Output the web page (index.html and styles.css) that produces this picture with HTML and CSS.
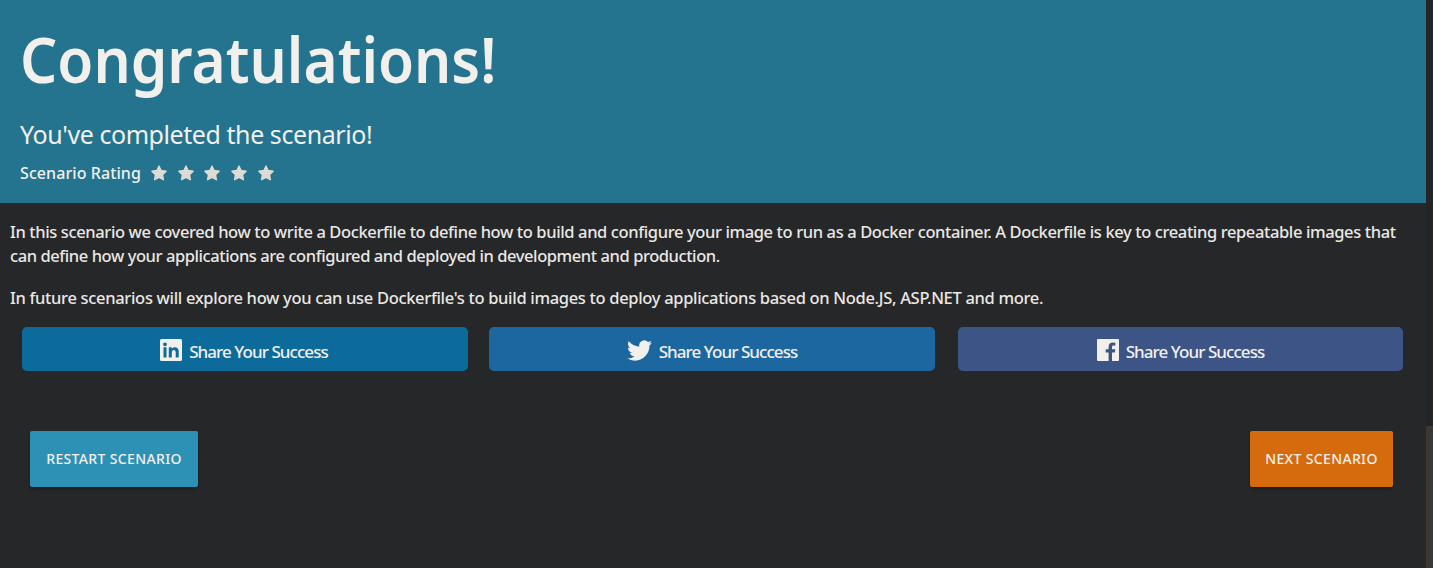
FILE: index.html
```
<!DOCTYPE html>
<html lang="en">
<head>
<meta charset="utf-8">
<title>Congratulations!</title>
<link rel="stylesheet" href="styles.css">
</head>
<body>
<svg class="symbols" aria-hidden="true">
  <symbol id="star" viewBox="0 0 24 24"><path stroke-width="2" stroke-linejoin="round" d="M12 1.500l3.200 6.700 7.500 1.100-5.400 5.300 1.300 7.500L12 18.600l-6.600 3.500 1.300-7.500L1.300 9.300l7.500-1.100z"/></symbol>
</svg>
<div class="page">
  <main class="panel">
    <header class="hero">
      <h1 class="title">Congratulations!</h1>
      <h2 class="subtitle">You've completed the scenario!</h2>
      <div class="rating">
        <span class="rating-label">Scenario Rating</span>
        <div class="stars">
          <svg class="star"><use href="#star"/></svg>
          <svg class="star"><use href="#star"/></svg>
          <svg class="star"><use href="#star"/></svg>
          <svg class="star"><use href="#star"/></svg>
          <svg class="star"><use href="#star"/></svg>
        </div>
      </div>
    </header>
    <section class="summary">
      <p class="copy intro"><span class="lead">In this scenario we covered how to write a Dockerfile to define how to build and configure your image to run as a Docker container. A Dockerfile is key to creating repeatable images that</span><br>can define how your applications are configured and deployed in development and production.</p>
      <p class="copy">In future scenarios will explore how you can use Dockerfile's to build images to deploy applications based on Node.JS, ASP.NET and more.</p>
    </section>
    <div class="share-row">
      <a class="share linkedin">
        <svg class="share-icon" viewBox="0 0 22 22"><path fill-rule="evenodd" d="M1.500 0h19A1.500 1.500 0 0 1 22 1.500v19a1.500 1.500 0 0 1-1.500 1.500h-19A1.500 1.500 0 0 1 0 20.500v-19A1.500 1.500 0 0 1 1.500 0zM3.500 8.300v10.300h3V8.300zM5 3.400a1.900 1.900 0 1 0 0 3.800 1.900 1.900 0 0 0 0-3.800zM8.800 8.300v10.300h3v-5.100c0-3.200 3.900-3.400 3.900 0v5.100h3v-6.200c0-5-5.200-5.200-6.900-2.600V8.300z"/></svg>
        <span class="share-text">Share Your Success</span>
      </a>
      <a class="share twitter">
        <svg class="share-icon bird" viewBox="0 2 24 20"><path d="M23.953 4.570a10 10 0 0 1-2.825.775 4.958 4.958 0 0 0 2.163-2.723 9.900 9.900 0 0 1-3.127 1.184 4.920 4.920 0 0 0-8.384 4.482C7.690 8.095 4.067 6.130 1.640 3.162a4.822 4.822 0 0 0-.666 2.475c0 1.710.87 3.213 2.188 4.096a4.904 4.904 0 0 1-2.228-.616v.06a4.923 4.923 0 0 0 3.946 4.827 4.996 4.996 0 0 1-2.212.085 4.936 4.936 0 0 0 4.604 3.417 9.867 9.867 0 0 1-6.102 2.105c-.39 0-.779-.023-1.170-.067a13.995 13.995 0 0 0 7.557 2.209c9.053 0 13.998-7.496 13.998-13.985 0-.21 0-.42-.015-.63A9.935 9.935 0 0 0 24 4.590z"/></svg>
        <span class="share-text">Share Your Success</span>
      </a>
      <a class="share facebook">
        <svg class="share-icon" viewBox="0 0 22 22"><path d="M1 0h20a1 1 0 0 1 1 1v20a1 1 0 0 1-1 1h-6v-8.500h2.900l.4-3.300H15V8.100c0-1 .3-1.600 1.700-1.600h1.700V3.700l-2.500-.1c-2.600 0-4.300 1.500-4.300 4.300v2.300H8.700v3.300h2.900V22H1a1 1 0 0 1-1-1V1a1 1 0 0 1 1-1z"/></svg>
        <span class="share-text">Share Your Success</span>
      </a>
    </div>
    <div class="actions">
      <button class="action restart">RESTART SCENARIO</button>
      <button class="action next">NEXT SCENARIO</button>
    </div>
  </main>
  <aside class="rail"><div class="thumb"></div></aside>
</div>
</body>
</html>
```
FILE: styles.css
```
* { box-sizing: border-box; }
body {
  margin: 0;
  background: #262729;
  color: #f2f0ec;
  font-family: "Noto Sans", "Open Sans", sans-serif;
  overflow: hidden;
}
.symbols { display: none; }
.page { display: flex; height: 568px; }
.panel { width: 1426px; background: #262729; }
.hero { height: 203px; padding: 15px 20px 0; background: #24748f; }
.title { margin: 0; font-size: 64px; line-height: 87px; font-weight: 600; transform: scaleX(.914); transform-origin: left; white-space: nowrap; }
.subtitle { margin: 14px 0 0; font-size: 25px; line-height: 36px; font-weight: 400; letter-spacing: -0.430px; }
.rating { display: flex; align-items: center; height: 42px; font-size: 16px; font-weight: 500; letter-spacing: 0.080px; }
.rating-label { width: 131px; white-space: nowrap; }
.stars { display: flex; gap: 10.700px; }
.star { width: 16px; height: 16px; fill: #dedbd5; stroke: #dedbd5; }
.summary { padding: 17px 10px 0; }
.copy { margin: 0 0 18px; font-size: 16.500px; line-height: 24px; font-weight: 500; letter-spacing: -0.322px; color: #eae8e4; white-space: nowrap; }
.intro { letter-spacing: -0.425px; }
.lead { letter-spacing: -0.382px; }
.share-row { display: grid; grid-template-columns: 446px 446px 445px; column-gap: 22px; padding-left: 22px; margin-top: -1px; }
.share { display: flex; align-items: center; justify-content: center; gap: 7px; height: 44px; border-radius: 5px; font-size: 17px; font-weight: 500; }
.linkedin { padding-right: 2px; background: #0d6b9c; }
.twitter { margin: 0 1px 0 -1px; width: 446px; background: #1d67a0; }
.facebook { background: #3d5487; }
.share-icon { width: 22px; height: 22px; margin-top: 2px; fill: #f2f0ec; }
.share-text { padding-top: 5px; letter-spacing: -0.930px; white-space: nowrap; }
.bird { width: 25px; height: 21px; }
.actions { display: flex; justify-content: space-between; padding: 60px 33px 0 30px; }
.action { height: 56px; padding: 0 0 2px; border: 0; border-radius: 2px; color: #f2f0ec; font: 500 14px "Noto Sans", sans-serif; letter-spacing: 0.350px; box-shadow: 0 2px 3px rgba(0,0,0,.25); white-space: nowrap; }
.restart { width: 168px; background: #2d91b6; }
.next { width: 143px; background: #d66b0d; }
.rail { display: flex; flex-direction: column; justify-content: flex-end; width: 7px; background: #242527; }
.thumb { height: 142px; background: #393833; }
```
